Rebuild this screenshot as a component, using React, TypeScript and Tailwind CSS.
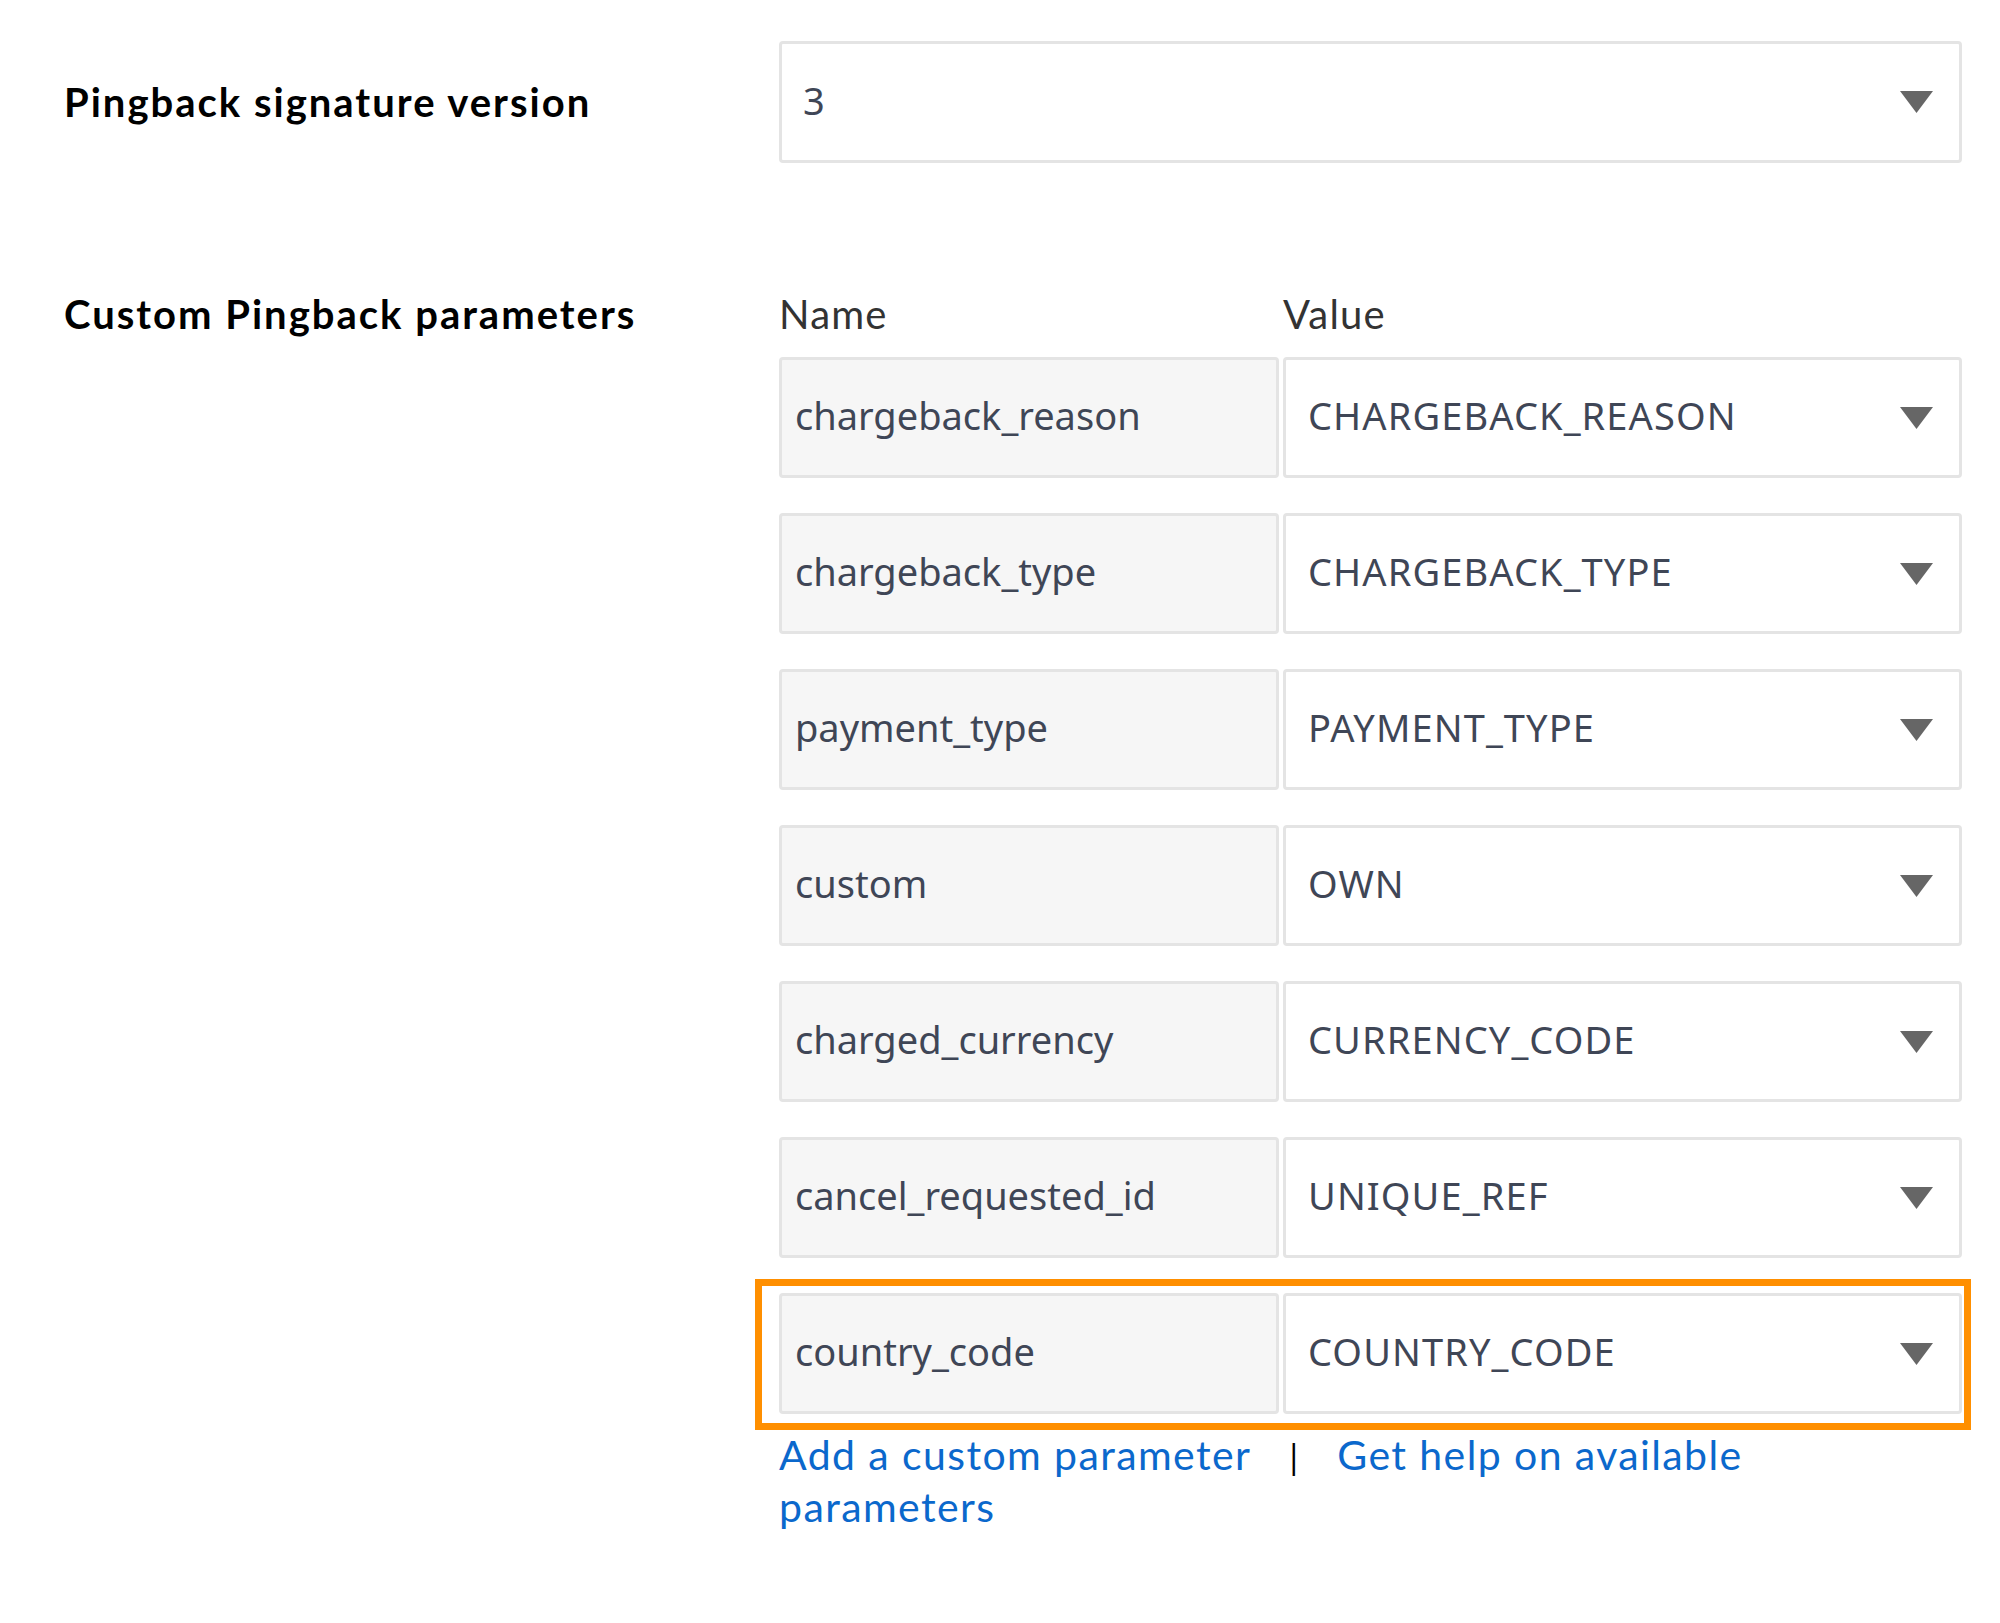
import React from "react";

type Param = { name: string; value: string };

const params: Param[] = [
  { name: "chargeback_reason", value: "CHARGEBACK_REASON" },
  { name: "chargeback_type", value: "CHARGEBACK_TYPE" },
  { name: "payment_type", value: "PAYMENT_TYPE" },
  { name: "custom", value: "OWN" },
  { name: "charged_currency", value: "CURRENCY_CODE" },
  { name: "cancel_requested_id", value: "UNIQUE_REF" },
  { name: "country_code", value: "COUNTRY_CODE" },
];

function Caret() {
  return (
    <svg width="33" height="22" viewBox="0 0 33 22" className="shrink-0">
      <path d="M0 0 H33 L16.5 22 Z" fill="#666666" />
    </svg>
  );
}

function Select({ value, padding = "pl-6" }: { value: string; padding?: string }) {
  return (
    <div
      className={`flex h-[121px] flex-1 items-center justify-between rounded-[4px] border-[3px] border-[#e4e4e4] bg-white ${padding} pr-[26px] text-[38px] tracking-[1.1px] text-[#3f4656]`}
    >
      <span className="-mt-[4px]">{value}</span>
      <Caret />
    </div>
  );
}

export default function App() {
  return (
    <div className="min-h-[1623px] w-full bg-white pl-16 pr-[38px] pt-[41px] font-['Lato',sans-serif]">
      {/* Signature version */}
      <div className="flex items-center">
        <div className="w-[715px] shrink-0 text-[40px] font-bold tracking-[2px] text-black">
          Pingback signature version
        </div>
        <div className="flex flex-1 font-['Noto_Sans',sans-serif]">
          <div className="flex h-[122px] flex-1 items-center justify-between rounded-[4px] border-[3px] border-[#e4e4e4] bg-white pl-[21px] pr-[26px] text-[38px] text-[#3f4656]">
            <span className="-mt-[4px]">3</span>
            <Caret />
          </div>
        </div>
      </div>

      {/* Custom params */}
      <div className="mt-[127px] flex">
        <div className="w-[715px] shrink-0 text-[40px] font-bold leading-[48px] tracking-[2px] text-black">
          Custom Pingback parameters
        </div>
        <div className="flex-1">
          <div className="flex text-[40px] leading-[48px] tracking-[1.2px] text-[#333333]">
            <span className="w-[504px]">Name</span>
            <span>Value</span>
          </div>

          <div className="mt-[19px] flex flex-col gap-[35px] font-['Noto_Sans',sans-serif]">
            {params.map((p, i) => (
              <div key={p.name} className="relative flex gap-[4px]">
                <div className="flex h-[121px] w-[500px] shrink-0 items-center rounded-[4px] border-[3px] border-[#e4e4e4] bg-[#f6f6f6] pl-[13px] text-[38px] text-[#3f4656]">
                  <span className="-mt-[4px]">{p.name}</span>
                </div>
                <Select value={p.value} padding="pl-[22px]" />
                {i === params.length - 1 && (
                  <div className="pointer-events-none absolute -top-[14px] -bottom-[16px] -left-[24px] -right-[9px] border-[7px] border-[#ff8f00]" />
                )}
              </div>
            ))}
          </div>

          {/* Links */}
          <div className="mt-[16px] text-[41px] leading-[50px] tracking-[1.4px] text-[#0b68cc]">
            <a href="#" className="hover:underline">Add a custom parameter</a>
            <span className="mx-[38px] text-[34px] text-black">|</span>
            <a href="#" className="hover:underline">
              Get help on available
              <br />
              parameters
            </a>
          </div>
        </div>
      </div>
    </div>
  );
}
